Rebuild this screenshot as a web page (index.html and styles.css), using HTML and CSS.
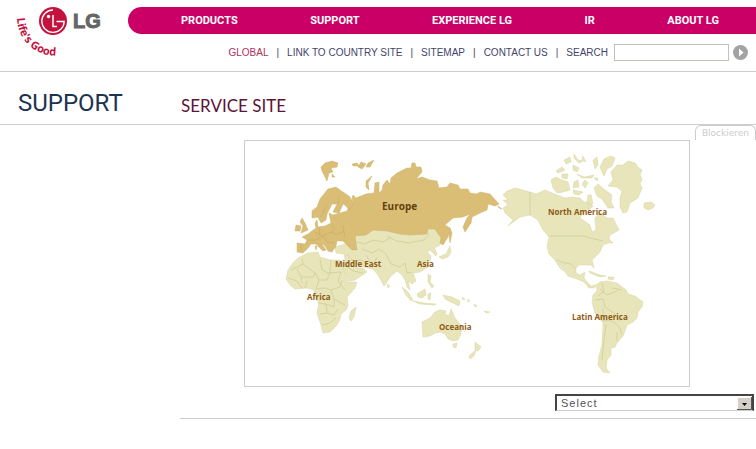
FILE: index.html
```html
<!DOCTYPE html>
<html lang="en">
<head>
<meta charset="utf-8">
<title>LG Support - Service Site</title>
<link rel="stylesheet" href="styles.css">
</head>
<body>
<header class="header">
  <a class="logo" href="#">
    <svg viewBox="0 0 100 60" width="100" height="60" role="img" aria-label="LG Life's Good">
      <defs><path id="arc" d="M9 18 A38 38 0 0 0 54 55"/></defs>
      <circle cx="45" cy="21" r="14" fill="#c4123f"/>
      <path d="M45 10 A11.200 11.200 0 1 0 56.200 21.500 H48.500" fill="none" stroke="#fff" stroke-width="1.300"/>
      <path d="M45 15 V26.500 H49" fill="none" stroke="#fff" stroke-width="1.500"/>
      <circle cx="40.500" cy="16.500" r="1.700" fill="#fff"/>
      <text class="logo-name" x="65" y="28">LG</text>
      <text class="logo-tag"><textPath href="#arc">Life's Good</textPath></text>
    </svg>
  </a>
  <div class="header-main">
    <nav class="main-nav">
      <a href="#">PRODUCTS</a>
      <a class="current" href="#">SUPPORT</a>
      <a href="#">EXPERIENCE LG</a>
      <a href="#">IR</a>
      <a href="#">ABOUT LG</a>
    </nav>
    <form class="utility">
      <a class="global" href="#">GLOBAL</a><span class="bar">|</span>
      <a href="#">LINK TO COUNTRY SITE</a><span class="bar">|</span>
      <a href="#">SITEMAP</a><span class="bar">|</span>
      <a href="#">CONTACT US</a><span class="bar">|</span>
      <label for="search">SEARCH</label>
      <input id="search" class="search" type="text">
      <button class="go" type="button" aria-label="Go">
        <svg viewBox="0 0 15 15" width="15" height="15"><circle cx="7.500" cy="7.500" r="7.500" fill="#a3a3a3"/><path d="M6 3.500 L10.500 7.500 L6 11.500Z" fill="#fff"/></svg>
      </button>
    </form>
  </div>
</header>
<div class="titles">
  <h1 class="section-title">SUPPORT</h1>
  <h2 class="page-title">SERVICE SITE</h2>
</div>
<main class="content">
  <div class="tab-row"><button class="block-tab" type="button">Blockieren</button></div>
  <div class="map">
    <svg viewBox="245 141 444 245" role="img" aria-label="World regions">
      <g class="land">
        <path d="M335 247 L345 244 L355 248 L354 233 L370 228 L440 225 L446 228 L440 245 L434 248 L437 253 L436 256 L432 252 L430 250 L427 252 L431 256 L430 261 L428 267 L420 272 L413 273 L416 281 L412 284 L408 281 L410 290 L407 287 L405 280 L402 275 L397 271 L390 277 L387 282 L384 286 L378 275 L373 269 L368 268 L360 266 L355 263 L358 268 L363 268 L367 272 L355 280 L349 281 L343 268 L342 263 L345 260 L344 254 L336 253Z"/>
        <path d="M298 258 L308 253 L318 252 L320 257 L330 260 L340 260 L342 265 L348 282 L357 282 L355 288 L347 297 L348 306 L346 310 L341 314 L340 319 L337 325 L330 332 L323 333 L321 325 L317 313 L319 303 L314 295 L314 290 L307 288 L295 289 L290 285 L286 279 L288 270 L293 263Z"/>
        <path d="M356 307 L354 317 L351 321 L349 318 L351 311Z"/>
        <path d="M503 195 L507 191 L515 188 L530 192 L536 194 L545 190 L557 195 L565 198 L572 197 L580 198 L584 202 L587 202 L588 195 L591 195 L593 203 L589 209 L584 211 L580 218 L590 225 L592 232 L596 230 L595 218 L600 213 L607 218 L613 218 L619 230 L610 235 L609 239 L613 243 L608 243 L603 245 L600 252 L592 260 L594 268 L591 265 L579 265 L576 268 L576 273 L580 275 L585 272 L584 278 L587 282 L591 286 L596 285 L594 288 L589 288 L584 282 L577 279 L568 276 L560 265 L558 264 L563 271 L560 268 L555 260 L549 254 L547 246 L549 237 L543 230 L538 220 L530 215 L520 217 L508 226 L513 220 L505 213 L503 208 L508 205 L503 200 L508 200Z"/>
        <path d="M596 285 L600 282 L607 281 L617 283 L626 290 L628 294 L635 296 L643 302 L642 307 L638 312 L637 318 L633 322 L627 325 L623 336 L617 343 L615 347 L611 348 L611 355 L607 360 L606 368 L610 373 L603 372 L598 365 L599 356 L602 345 L603 323 L595 313 L592 302 L593 295 L597 291Z"/>
        <path d="M608 186 L613 180 L611 172 L617 165 L623 165 L628 161 L635 163 L639 168 L642 170 L640 175 L642 179 L640 184 L642 188 L638 198 L630 203 L627 212 L623 213 L620 207 L620 198 L622 191 L617 187Z"/>
        <path d="M644 203 L651 202 L655 205 L653 208 L648 210 L644 208Z"/>
        <path d="M422 322 L430 318 L435 312 L440 310 L446 311 L445 314 L449 316 L451 309 L455 318 L462 327 L461 334 L458 340 L453 341 L448 339 L445 334 L441 332 L435 333 L430 336 L423 337Z M453 344 L457 343 L456 348 L453 347Z M475 342 L481 347 L478 351 L475 350Z M476 350 L474 356 L470 359 L469 356Z"/>
        <path d="M402 287 L408 292 L413 300 L411 301 L406 295Z M413 301 L424 303 L436 304 L434 305 L420 304Z M417 294 L425 289 L426 295 L422 298 L418 297Z M428 294 L431 293 L430 300 L428 299Z M428 274 L431 276 L430 282 L434 286 L432 288 L428 282Z M443 295 L452 297 L460 301 L459 306 L453 303 L445 299Z M439 257 L446 254 L450 246 L451 252 L448 257 L442 259Z M462 297 L465 299 L463 300Z M468 299 L470 301 L468 302Z M474 304 L477 306 L475 307Z M484 311 L490 312 L486 313Z M589 271 L600 275 L606 276 L600 277 L590 273Z M608 277 L614 277 L613 280 L608 279Z M387 284 L390 286 L388 288Z"/>
        <path d="M551 180 L556 177 L562 180 L568 182 L570 190 L563 192 L557 193 L553 188Z M556 171 L562 167 L565 170 L558 173Z M564 160 L570 157 L571 162 L566 164Z M574 154 L578 160 L583 161 L579 163 L574 158Z M583 156 L586 162 L582 160Z M562 174 L568 174 L567 179 L562 178Z M573 165 L579 168 L577 172 L573 170Z M577 174 L584 177 L594 175 L592 178 L582 178Z M574 182 L578 180 L579 187 L573 188Z M585 180 L588 183 L585 188 L582 184Z M593 160 L597 157 L598 165 L595 169Z M602 172 L600 167 L604 159 L611 156 L615 158 L612 166 L607 169 L604 176Z M594 188 L598 184 L605 190 L612 195 L611 202 L614 208 L608 208 L602 199 L597 196Z M594 178 L598 178 L597 181Z M573 190 L583 192 L579 195 L574 194Z M588 203 L593 206 L589 210Z"/>
      </g>
      <g class="europe">
        <path d="M297 243 L305 244 L307 240 L302 237 L308 234 L312 231 L316 228 L315 223 L317 220 L318 227 L325 226 L331 223 L329 213 L333 215 L340 213 L347 211 L350 205 L354 203 L352 198 L353 195 L356 198 L366 194 L374 193 L375 183 L379 182 L379 193 L382 190 L383 185 L387 180 L390 184 L391 178 L397 173 L407 168 L411 168 L412 163 L415 163 L416 167 L421 167 L422 172 L416 179 L422 177 L430 180 L437 181 L439 188 L447 187 L450 183 L458 185 L460 189 L468 189 L470 193 L477 194 L480 192 L490 194 L499 204 L495 206 L488 204 L487 210 L480 213 L472 217 L471 223 L465 232 L463 227 L467 218 L470 214 L463 217 L453 218 L445 225 L450 228 L448 237 L443 245 L440 243 L441 238 L435 229 L428 229 L427 234 L410 235 L400 234 L387 231 L373 230 L366 235 L355 236 L357 250 L352 250 L343 241 L337 241 L336 246 L332 252 L328 251 L325 246 L321 243 L326 250 L323 251 L316 244 L311 244 L308 248 L303 253 L297 252Z"/>
        <path d="M312 218 L312 211 L317 207 L320 199 L328 189 L336 187 L340 190 L349 196 L354 203 L349 210 L346 206 L343 204 L339 213 L333 212 L337 204 L332 204 L327 214 L326 220 L321 223 L318 217Z"/>
        <path d="M302 218 L305 223 L308 230 L301 233 L303 226 L300 222Z M296 225 L301 226 L300 231 L295 231Z M321 167 L325 163 L332 161 L338 163 L337 167 L331 168 L333 172 L329 173 L327 181 L324 175 L322 171Z M332 174 L335 177 L332 177Z M352 164 L357 163 L359 166 L353 166Z M361 162 L366 164 L362 169 L358 167Z M368 163 L374 160 L370 167 L366 167Z M372 176 L368 183 L369 190 L366 187 L366 181Z M498 206 L502 209 L499 208Z M315 246 L317 246 L316 250Z M450 228 L452 233 L450 243 L449 234Z"/>
      </g>
      <g class="borders">
        <path d="M530 192 V215 M550 236 H583 L590 238 L603 241 M556 260 L565 263 L571 264 L576 269"/>
        <path d="M291 270 L303 264 L302 259 M303 264 L315 273 L313 277 L301 277 L297 269 M320 259 L322 270 L328 273 L341 272 M331 260 L330 273 L327 280 L319 280 L315 273 M288 278 L297 281 L302 288 M307 281 L305 288 M319 280 L316 289 L325 288 L331 290 L340 287 L342 280 M341 272 L338 281 L345 290 M331 290 L334 299 L345 305 M318 303 L326 304 L334 307 L334 299 M326 304 L327 313 L320 314 M327 313 L334 315 L338 309 M322 325 L330 323 L336 318 M301 278 L302 283"/>
        <path d="M387 236 L397 241 L409 243 L424 240 L429 234 M356 242 L365 244 L373 240 L383 242 L390 238 M362 249 L372 253 L379 249 L386 254 L391 264 L400 267 L405 263 M366 255 L371 263 M347 254 L353 261 L362 260 L367 265 M346 266 L353 271 L363 273 M405 263 L407 273 L412 272 M377 257 L372 268"/>
        <path d="M600 289 L607 295 L617 291 M602 283 L604 291 L598 296 M595 300 L603 299 L605 307 L615 314 L620 321 M603 308 L603 321 L610 320 L615 323 L620 328 L622 335 M617 332 L617 341 M606 324 L604 340 L602 360 M612 288 L622 290"/>
        <path class="on-gold" d="M327 205 L321 217 M338 204 L339 196 M315 232 L323 236 L331 232 L337 235 L344 231 M308 240 L316 240 L323 236 L327 242 L334 243 M331 224 L335 229 L331 233 M301 244 V252 M343 226 L345 237 M319 228 L320 236"/>
      </g>
      <g class="regions">
        <text class="strong" x="382" y="210">Europe</text>
        <text x="335" y="267">Middle East</text>
        <text x="417" y="267">Asia</text>
        <text x="307" y="300">Africa</text>
        <text x="439" y="330">Oceania</text>
        <text x="548" y="215">North America</text>
        <text x="572" y="320">Latin America</text>
      </g>
    </svg>
  </div>
  <div class="picker">
    <select class="country" aria-label="Country"><option>Select</option></select>
    <svg class="arrow" viewBox="0 0 15 13" width="15" height="13"><path d="M0 0H15V13H0Z" fill="#d4d0c8"/><path d="M0.500 13V0.500H15" fill="none" stroke="#fff"/><path d="M14.500 0V12.500H0" fill="none" stroke="#555"/><path d="M5 6H10L7.500 9Z" fill="#000"/></svg>
  </div>
</main>
</body>
</html>
```
FILE: styles.css
```css
* { box-sizing: border-box; }
body { margin: 0; background: #fff; font-family: "Liberation Sans", Arial, sans-serif; }
a { color: inherit; text-decoration: none; }

.header { display: flex; height: 72px; border-bottom: 1px solid #ccc; }
.logo { flex: 0 0 128px; padding-left: 8px; }
.logo svg { display: block; overflow: visible; }
.logo-name { font: bold 20px "Liberation Sans", sans-serif; fill: #666; stroke: #666; stroke-width: 1px; }
.logo-tag { font: bold 11px "Open Sans", sans-serif; fill: #c4123f; }
.header-main { flex: 1; padding-top: 7px; }
.main-nav {
  display: flex; justify-content: space-between; align-items: center;
  height: 27px; padding: 0 37px 0 53px;
  background: #cb0066; border-radius: 14px 0 0 14px;
  color: #fff; font: bold 11px Roboto, sans-serif;
}
.utility {
  display: flex; align-items: center; justify-content: flex-end;
  margin-top: 9px; padding-right: 8px; height: 18px;
  font-size: 10px; color: #44446a;
}
.global { color: #b03060; }
.bar { margin: 0 8px; }
.search { width: 115px; height: 17px; margin: 0 4px 0 6px; padding: 0 3px; border: 1px solid #bcc4b8; background: #fff; font-size: 11px; }
.go { display: flex; padding: 0; border: 0; background: none; }

.titles { display: grid; grid-template-columns: 163px 1fr; align-items: end; height: 53px; padding: 0 0 6px 18px; border-bottom: 1px solid #ccc; }
.titles h1, .titles h2 { margin: 0; font-weight: normal; }
.section-title { font-family: Roboto, sans-serif; font-size: 24px; line-height: 30px; color: #1c3450; }
.page-title { font-family: Lato, sans-serif; font-size: 17px; line-height: 24px; color: #5c1438; }

.content { margin-left: 180px; padding-bottom: 7px; border-bottom: 1px solid #ccc; }
.tab-row { display: flex; justify-content: flex-end; height: 15px; }
.block-tab {
  height: 15px; padding: 0 6px; border: 1px solid #ccc; border-bottom: 0; border-radius: 6px 6px 0 0;
  background: #fff; color: #ccc; font: 9px "DejaVu Sans", sans-serif;
}
.map { width: 446px; max-width: 100%; margin: 0 66px 7px auto; border: 1px solid #ccc; }
.map svg { display: block; width: 100%; }
.land { fill: #e7e5b9; stroke: #d6d4a0; stroke-width: 0.5px; }
.europe { fill: #dabe76; stroke: #cdb068; stroke-width: 0.5px; }
.borders { fill: none; stroke: #c8c691; stroke-width: 0.6px; }
.on-gold { stroke: #c8a75c; }
.regions { font: bold 8px "Open Sans", sans-serif; fill: #8f5a14; }
.regions .strong { font-size: 10px; fill: #63400f; }

.picker { position: relative; width: 199px; margin: 0 2px 0 auto; }
.country {
  display: block; width: 100%; height: 17px; padding: 0 18px 0 4px; appearance: none;
  border: 2px solid #444; border-bottom: 1px solid #ccc; border-radius: 0; background: #fff;
  font: 11px "Liberation Sans", sans-serif; letter-spacing: 1px; color: #555;
}
.arrow { position: absolute; right: 2px; top: 3px; }
```
